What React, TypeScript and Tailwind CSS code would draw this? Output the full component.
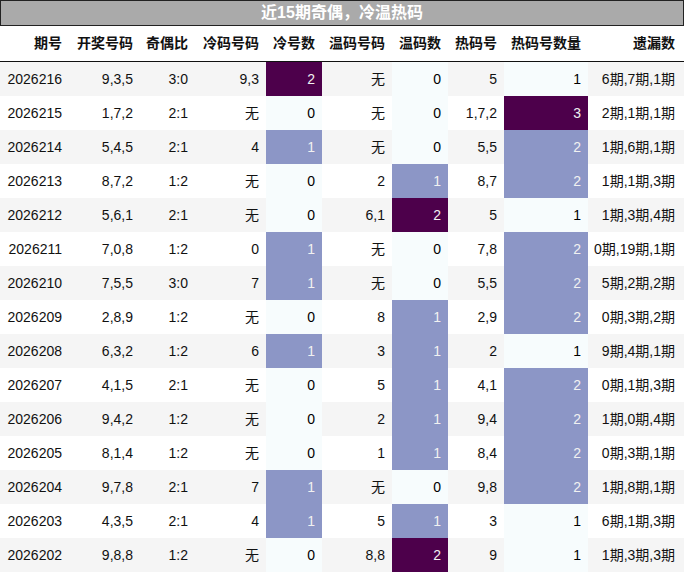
const rows: (string | number)[][] = [
  ["2026216", "9,3,5", "3:0", "9,3", 2, "无", 0, "5", 1, "6期,7期,1期"],
  ["2026215", "1,7,2", "2:1", "无", 0, "无", 0, "1,7,2", 3, "2期,1期,1期"],
  ["2026214", "5,4,5", "2:1", "4", 1, "无", 0, "5,5", 2, "1期,6期,1期"],
  ["2026213", "8,7,2", "1:2", "无", 0, "2", 1, "8,7", 2, "1期,1期,3期"],
  ["2026212", "5,6,1", "2:1", "无", 0, "6,1", 2, "5", 1, "1期,3期,4期"],
  ["2026211", "7,0,8", "1:2", "0", 1, "无", 0, "7,8", 2, "0期,19期,1期"],
  ["2026210", "7,5,5", "3:0", "7", 1, "无", 0, "5,5", 2, "5期,2期,2期"],
  ["2026209", "2,8,9", "1:2", "无", 0, "8", 1, "2,9", 2, "0期,3期,2期"],
  ["2026208", "6,3,2", "1:2", "6", 1, "3", 1, "2", 1, "9期,4期,1期"],
  ["2026207", "4,1,5", "2:1", "无", 0, "5", 1, "4,1", 2, "0期,1期,3期"],
  ["2026206", "9,4,2", "1:2", "无", 0, "2", 1, "9,4", 2, "1期,0期,4期"],
  ["2026205", "8,1,4", "1:2", "无", 0, "1", 1, "8,4", 2, "0期,3期,1期"],
  ["2026204", "9,7,8", "2:1", "7", 1, "无", 0, "9,8", 2, "1期,8期,1期"],
  ["2026203", "4,3,5", "2:1", "4", 1, "5", 1, "3", 1, "6期,1期,3期"],
  ["2026202", "9,8,8", "1:2", "无", 0, "8,8", 2, "9", 1, "1期,3期,3期"],
];

const headers = ["期号", "开奖号码", "奇偶比", "冷码号码", "冷号数", "温码号码", "温码数", "热码号", "热码号数量", "遗漏数"];

// heat scale per column: index 0 = low, 1 = mid, 2 = high
const heat = [
  "bg-[#f7fcfd] text-[#000000]",
  "bg-[#8c96c6] text-[#f1f1f1]",
  "bg-[#4d004b] text-[#f1f1f1]",
];

const cellClass = (row: number, col: number, v: string | number) => {
  if (col === 4 || col === 6) return heat[v as number];
  if (col === 8) return heat[(v as number) - 1];
  return row % 2 === 0 ? "bg-[#f5f5f5]" : "bg-white";
};

export default function App() {
  return (
    <div
      className="w-[684px] h-[573px] overflow-hidden bg-white text-[14px] text-[#111]"
      style={{ fontFamily: '"Liberation Sans", "Noto Sans CJK SC", sans-serif' }}
    >
      <div className="h-[26px] border border-[#222] bg-[#aaaaaa] flex items-center justify-center text-white font-bold text-[16px]">
        近15期奇偶，冷温热码
      </div>
      <div className="grid grid-cols-[69px_71px_55px_71px_56px_70px_56px_56px_84px_96px]">
        {headers.map((h, c) => (
          <div
            key={h}
            className={`h-[36px] border-b border-[#111] flex items-center justify-end font-bold ${c === 9 ? "pr-[9px]" : "pr-[7px]"}`}
          >
            {h}
          </div>
        ))}
        {rows.map((r, i) =>
          r.map((v, c) => (
            <div
              key={i + "-" + c}
              className={`h-[34px] flex items-center justify-end whitespace-nowrap ${c === 9 ? "pr-[9px]" : "pr-[7px]"} ${cellClass(i, c, v)}`}
            >
              {v}
            </div>
          ))
        )}
      </div>
    </div>
  );
}
